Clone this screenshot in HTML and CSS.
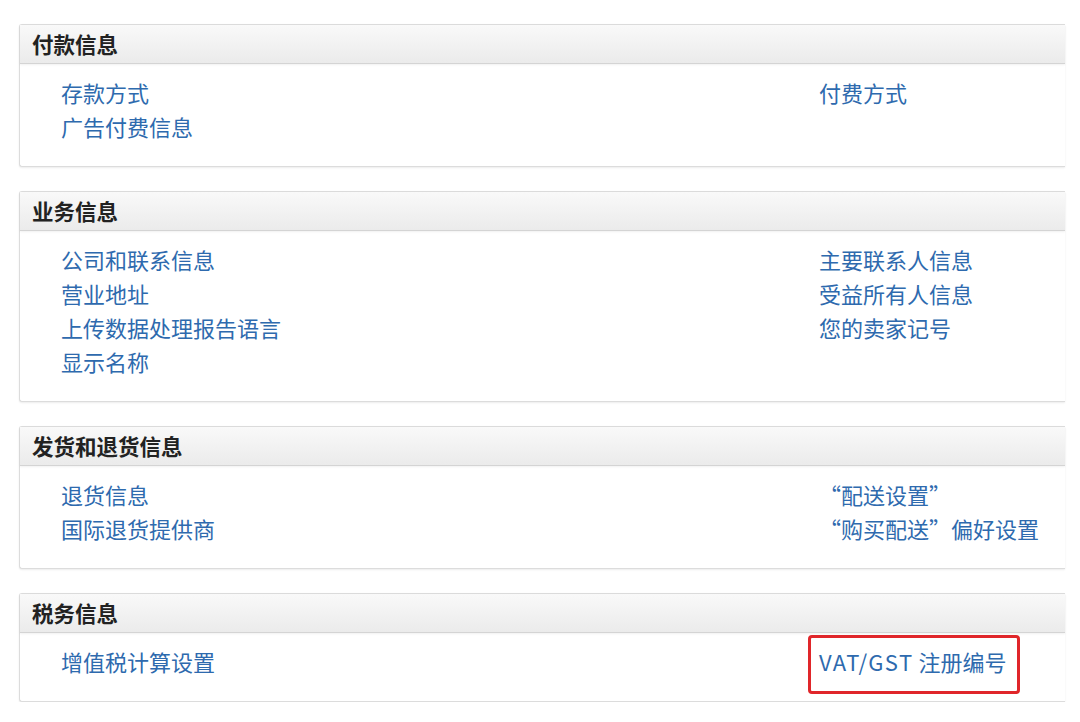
FILE: index.html
```html
<!DOCTYPE html>
<html lang="zh-CN">
<head>
<meta charset="utf-8">
<title>设置</title>
<link rel="stylesheet" href="styles.css">
</head>
<body>
<div class="page">
  <section class="panel">
    <h2 class="panel-head">付款信息</h2>
    <div class="panel-body">
      <ul class="col">
        <li><a href="#">存款方式</a></li>
        <li><a href="#">广告付费信息</a></li>
      </ul>
      <ul class="col">
        <li><a href="#">付费方式</a></li>
      </ul>
    </div>
  </section>

  <section class="panel">
    <h2 class="panel-head">业务信息</h2>
    <div class="panel-body">
      <ul class="col">
        <li><a href="#">公司和联系信息</a></li>
        <li><a href="#">营业地址</a></li>
        <li><a href="#">上传数据处理报告语言</a></li>
        <li><a href="#">显示名称</a></li>
      </ul>
      <ul class="col">
        <li><a href="#">主要联系人信息</a></li>
        <li><a href="#">受益所有人信息</a></li>
        <li><a href="#">您的卖家记号</a></li>
      </ul>
    </div>
  </section>

  <section class="panel">
    <h2 class="panel-head">发货和退货信息</h2>
    <div class="panel-body">
      <ul class="col">
        <li><a href="#">退货信息</a></li>
        <li><a href="#">国际退货提供商</a></li>
      </ul>
      <ul class="col">
        <li><a href="#">“配送设置”</a></li>
        <li><a href="#">“购买配送”偏好设置</a></li>
      </ul>
    </div>
  </section>

  <section class="panel">
    <h2 class="panel-head">税务信息</h2>
    <div class="panel-body">
      <ul class="col">
        <li><a href="#">增值税计算设置</a></li>
      </ul>
      <ul class="col">
        <li><a href="#" class="highlight"><span class="latin">VAT/GST</span> 注册编号</a></li>
      </ul>
    </div>
  </section>
</div>
</body>
</html>
```

FILE: styles.css
```css
* { box-sizing: border-box; }

html, body {
  margin: 0;
  padding: 0;
  background: #ffffff;
}

body {
  font-family: "Noto Sans CJK SC", "Noto Sans", sans-serif;
}

.page {
  padding: 24px 15px 0 19px;
  display: flex;
  flex-direction: column;
  gap: 24px;
}

.panel {
  border: 1px solid #dcdcdc;
  border-right: none;
  border-radius: 3px 0 0 3px;
  background: #fff;
  box-shadow: 0 1px 2px rgba(0, 0, 0, 0.08);
}

.panel-head {
  margin: 0;
  height: 39px;
  padding: 0 0 0 12px;
  font-size: 21.5px;
  font-weight: 700;
  line-height: 37px;
  color: #222;
  background: linear-gradient(#f9f9f9, #ebebeb);
  border-bottom: 1px solid #d4d4d4;
  box-shadow: 0 1px 2px rgba(0, 0, 0, 0.06);
}

.panel-body {
  display: grid;
  grid-template-columns: 758px 1fr;
  padding: 12px 0 22px 41px;
}

.col {
  list-style: none;
  margin: 0;
  padding: 0;
}

.col li {
  height: 34px;
  line-height: 32px;
}

.col a {
  font-size: 22px;
  color: #2e6aae;
  text-decoration: none;
  white-space: nowrap;
}

.highlight {
  position: relative;
  display: inline-block;
}

.latin {
  letter-spacing: 1.4px;
}

.highlight::after {
  content: "";
  position: absolute;
  left: -11px;
  right: -14px;
  top: -10px;
  bottom: -17px;
  border: 3px solid #e0262a;
  border-radius: 4px;
}
```
